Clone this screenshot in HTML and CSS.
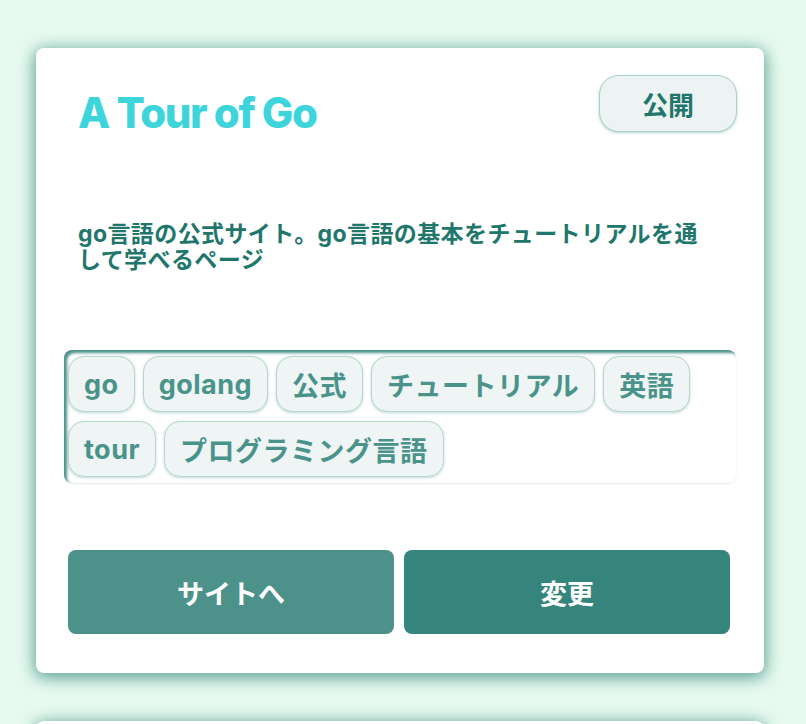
FILE: index.html
```html
<!DOCTYPE html>
<html lang="ja">
<head>
<meta charset="utf-8">
<link rel="stylesheet" href="styles.css">
</head>
<body>
<main class="list">
  <section class="card">
    <header class="card-head">
      <h1 class="title">A Tour of Go</h1>
      <button class="status">公開</button>
    </header>
    <p class="desc">go言語の公式サイト。go言語の基本をチュートリアルを通して学べるページ</p>
    <div class="tags">
      <span class="tag">go</span>
      <span class="tag">golang</span>
      <span class="tag">公式</span>
      <span class="tag">チュートリアル</span>
      <span class="tag">英語</span>
      <span class="tag">tour</span>
      <span class="tag">プログラミング言語</span>
    </div>
    <div class="actions">
      <button class="btn btn-visit">サイトへ</button>
      <button class="btn btn-edit">変更</button>
    </div>
  </section>
  <section class="card"></section>
</main>
</body>
</html>
```
FILE: styles.css
```css
* { box-sizing: border-box; }
html, body { margin: 0; padding: 0; }
body {
  background: #e7faf0;
  font-family: Inter, "Noto Sans CJK JP", sans-serif;
  overflow: hidden;
  height: 724px;
}
.list {
  display: flex;
  flex-direction: column;
  gap: 48px;
  padding: 48px 0 0 36px;
}
.card {
  width: 728px;
  min-height: 625px;
  background: #fff;
  border-radius: 8px;
  box-shadow: 0 3px 16px 2px rgba(45, 130, 118, 0.72);
  flex-shrink: 0;
}
.card-head {
  display: flex;
  justify-content: space-between;
  align-items: flex-start;
  padding: 27px 27px 0 42px;
}
.title {
  margin: 13px 0 0;
  font-size: 42px;
  line-height: 50px;
  font-weight: 800;
  letter-spacing: -0.035em;
  color: #3dd5db;
}
.status {
  width: 138px;
  height: 57px;
  border-radius: 20px;
  border: 1px solid #a9d2cc;
  background: #edf2f2;
  box-shadow: 0 1px 3px rgba(40, 130, 118, 0.35);
  color: #21766b;
  font-family: inherit;
  font-size: 26px;
  font-weight: 700;
  padding: 0;
}
.desc {
  margin: 83px 0 0;
  padding: 0 52px 0 42px;
  font-size: 23px;
  line-height: 26px;
  letter-spacing: 0.4px;
  font-weight: 700;
  color: #21766b;
}
.tags {
  margin: 77px 28px 0;
  padding: 6px 4px 6px 4px;
  display: flex;
  flex-wrap: wrap;
  gap: 9px 8px;
  border-radius: 8px;
  box-shadow: inset 3px 3px 3px rgba(53, 133, 124, 0.9), 0 1px 2px rgba(53, 133, 124, 0.15);
}
.tag {
  display: inline-flex;
  align-items: center;
  height: 56px;
  padding: 0 15px;
  border-radius: 16px;
  border: 1px solid #b5d6d1;
  background: #eff4f4;
  box-shadow: 0 1px 3px rgba(53, 133, 124, 0.3);
  color: #4a938a;
  font-size: 27px;
  letter-spacing: 0.5px;
  font-weight: 700;
}
.actions {
  display: flex;
  gap: 10px;
  margin: 67px 34px 0 32px;
}
.btn {
  flex: 1;
  height: 84px;
  border: 0;
  border-radius: 8px;
  color: #fff;
  font-family: inherit;
  font-size: 27px;
  font-weight: 700;
}
.btn-visit { background: #4c928a; }
.btn-edit { background: #35857c; }
```
